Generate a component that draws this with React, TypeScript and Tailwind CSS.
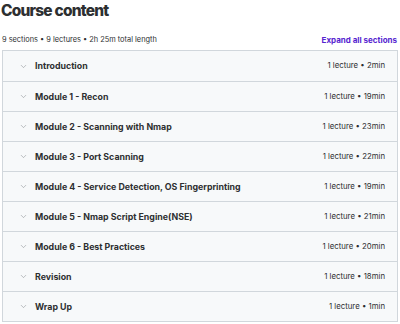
import { ChevronDown } from 'lucide-react';

const sections = [
  { title: 'Introduction', meta: '1 lecture • 2min' },
  { title: 'Module 1 - Recon', meta: '1 lecture • 19min' },
  { title: 'Module 2 - Scanning with Nmap', meta: '1 lecture • 23min' },
  { title: 'Module 3 - Port Scanning', meta: '1 lecture • 22min' },
  { title: 'Module 4 - Service Detection, OS Fingerprinting', meta: '1 lecture • 19min' },
  { title: 'Module 5 - Nmap Script Engine(NSE)', meta: '1 lecture • 21min' },
  { title: 'Module 6 - Best Practices', meta: '1 lecture • 20min' },
  { title: 'Revision', meta: '1 lecture • 18min' },
  { title: 'Wrap Up', meta: '1 lecture • 1min' },
];

export default function App() {
  return (
    <div className="w-[400px] h-[324px] bg-white text-[#2d2f31] overflow-hidden" style={{ fontFamily: 'Inter, "Noto Sans", sans-serif' }}>
      <h2 className="text-[15.5px] font-extrabold leading-[20px] pt-[1px] pl-[1px] tracking-[-0.8px]">Course content</h2>
      <div className="flex items-center justify-between h-[18px] mt-[10px] pl-[2px] pr-[3px]">
        <span className="text-[7.4px] text-[#2d2f31]">9 sections • 9 lectures • 2h 25m total length</span>
        <button className="text-[8px] font-bold text-[#5624d0]">Expand all sections</button>
      </div>
      <div className="mt-[1px] mx-[2px] w-[396px] border border-[#d1d7dc]">
        {sections.map((s, i) => (
          <div
            key={s.title}
            className={`flex items-center h-[30px] bg-[#f7f9fa] pl-[16px] pr-[12px] ${i > 0 ? 'border-t border-[#d1d7dc]' : ''}`}
          >
            <ChevronDown size={9} strokeWidth={1.5} className="text-[#8a8f93]" />
            <span className="ml-[7px] text-[8.8px] font-bold flex-1">{s.title}</span>
            <span className="text-[7.8px] text-[#2d2f31]">{s.meta}</span>
          </div>
        ))}
      </div>
    </div>
  );
}
